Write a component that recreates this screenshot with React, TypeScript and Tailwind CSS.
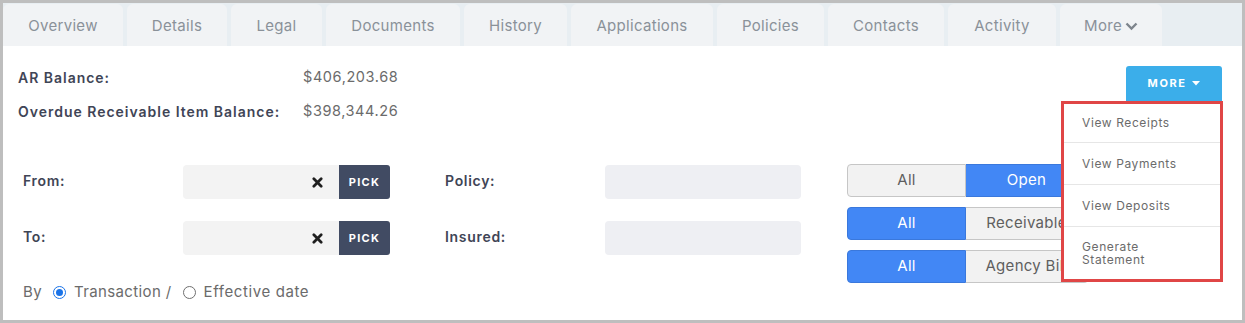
import React from "react";

const tabs: { label: string; w: number }[] = [
  { label: "Overview", w: 120 },
  { label: "Details", w: 100 },
  { label: "Legal", w: 91 },
  { label: "Documents", w: 134 },
  { label: "History", w: 103 },
  { label: "Applications", w: 142 },
  { label: "Policies", w: 107 },
  { label: "Contacts", w: 116 },
  { label: "Activity", w: 108 },
];

const font = { fontFamily: "Inter, 'Noto Sans', sans-serif" };

function Seg({ left, right, leftActive }: { left: string; right: string; leftActive: boolean }) {
  const on = "bg-[#4287f5] border-[#3a78dc] text-white";
  const off = "bg-[#f2f2f2] border-[#c6c6c6] text-[#5f5f5f]";
  return (
    <div className="flex h-[33px] text-[15px] tracking-[0.02em]">
      <div className={`w-[119px] flex items-center justify-center border rounded-l-[4px] ${leftActive ? on : off}`}>{left}</div>
      <div className={`w-[122px] flex items-center justify-center border border-l-0 rounded-r-[4px] whitespace-nowrap ${leftActive ? off : on}`}>{right}</div>
    </div>
  );
}

function DateInput() {
  return (
    <div className="flex h-[34px] w-[207px]">
      <div className="flex-1 bg-[#f3f3f3] rounded-l-[4px] flex items-center justify-end pr-[16px]">
        <svg width="11" height="11" viewBox="0 0 12 12">
          <path d="M2 2 L10 10 M10 2 L2 10" stroke="#1f1f1f" strokeWidth="3" strokeLinecap="round" />
        </svg>
      </div>
      <div className="w-[51px] bg-[#414b63] rounded-r-[3px] flex items-center justify-center text-white text-[11px] font-bold tracking-[0.12em]">
        PICK
      </div>
    </div>
  );
}

export default function App() {
  return (
    <div className="w-[1245px] h-[323px] border-[3px] border-[#bebebe] bg-white relative overflow-hidden" style={font}>
      {/* tabs */}
      <div className="flex h-[43px] bg-[#e8eef2] gap-[4px] pt-[1px]">
        {tabs.map((t) => (
          <div
            key={t.label}
            className="h-[42px] bg-[#f1f3f5] rounded-t-[6px] flex items-center justify-center pt-[2px] text-[15px] tracking-[0.02em] text-[#8a9199]"
            style={{ width: t.w }}
          >
            {t.label}
          </div>
        ))}
        <div className="h-[42px] w-[102px] bg-[#f1f3f5] rounded-t-[6px] flex items-center justify-center pt-[2px] text-[15px] tracking-[0.02em] text-[#8a9199] gap-[3px]">
          More
          <svg width="13" height="10" viewBox="0 0 13 10">
            <path d="M1.5 2.5 L6.5 7.5 L11.5 2.5" stroke="#7d848c" strokeWidth="2.4" fill="none" />
          </svg>
        </div>
      </div>

      {/* balances */}
      <div className="flex justify-between">
        <div className="pl-[15px] pt-[14px]">
          <div className="flex h-[34px] items-center">
            <div className="w-[285px] text-[14px] font-semibold tracking-[0.07em] text-[#3f4556]">AR Balance:</div>
            <div className="text-[14.5px] tracking-[0.04em] text-[#6b6b6b]">$406,203.68</div>
          </div>
          <div className="flex h-[34px] items-center">
            <div className="w-[285px] text-[14px] font-semibold tracking-[0.07em] text-[#3f4556] whitespace-nowrap">Overdue Receivable Item Balance:</div>
            <div className="text-[14.5px] tracking-[0.04em] text-[#6b6b6b]">$398,344.26</div>
          </div>
        </div>
        <div className="mt-[20px] mr-[20px] w-[96px] h-[35px] bg-[#3baeea] rounded-t-[3px] flex items-center justify-center gap-[6px] text-white text-[11px] font-bold tracking-[0.14em]">
          MORE
          <svg width="8" height="5" viewBox="0 0 8 5">
            <path d="M0 0 L8 0 L4 4.5 Z" fill="#ffffff" />
          </svg>
        </div>
      </div>

      {/* form */}
      <div className="flex pl-[20px] mt-[36px]">
        <div className="flex flex-col">
          <div className="mt-[1px] flex flex-col gap-[22px]">
            {[
              ["From:", "Policy:"],
              ["To:", "Insured:"],
            ].map(([a, b]) => (
              <div key={a} className="flex items-center h-[34px]">
                <div className="w-[160px] text-[14px] font-semibold tracking-[0.05em] text-[#3f4556] -mt-[3px]">{a}</div>
                <DateInput />
                <div className="w-[55px]" />
                <div className="w-[160px] text-[14px] font-semibold tracking-[0.05em] text-[#3f4556] -mt-[3px]">{b}</div>
                <div className="w-[196px] h-[34px] bg-[#eeeff3] rounded-[4px]" />
              </div>
            ))}
          </div>
          <div className="mt-[27px] flex items-center h-[20px] text-[15px] tracking-[0.025em] text-[#6b6b6b]">
            <span>By</span>
            <span className="ml-[11px] w-[13px] h-[13px] rounded-full border-[1.5px] border-[#1a73e8] flex items-center justify-center">
              <span className="w-[7px] h-[7px] rounded-full bg-[#1a73e8]" />
            </span>
            <span className="ml-[8px]">Transaction /</span>
            <span className="ml-[11px] w-[13px] h-[13px] rounded-full border-[1.3px] border-[#6f6f6f]" />
            <span className="ml-[8px] tracking-[0.04em]">Effective date</span>
          </div>
        </div>
        <div className="ml-[46px] flex flex-col gap-[10px]">
          <Seg left="All" right="Open" leftActive={false} />
          <Seg left="All" right="Receivable" leftActive={true} />
          <Seg left="All" right="Agency Bill" leftActive={true} />
        </div>
      </div>

      {/* dropdown */}
      <div className="absolute left-[1058px] top-[98px] w-[162px] h-[181px] border-[3px] border-[#e04646] bg-white text-[12px] tracking-[0.05em] text-[#6b6b6b]">
        <div className="h-[39px] flex items-center pl-[18px] border-b border-[#e6e6e6]">View Receipts</div>
        <div className="h-[42px] flex items-center pl-[18px] border-b border-[#e6e6e6]">View Payments</div>
        <div className="h-[42px] flex items-center pl-[18px] border-b border-[#e6e6e6]">View Deposits</div>
        <div className="pl-[18px] pt-[13px] leading-[13px]">
          Generate
          <br />
          Statement
        </div>
      </div>
    </div>
  );
}
